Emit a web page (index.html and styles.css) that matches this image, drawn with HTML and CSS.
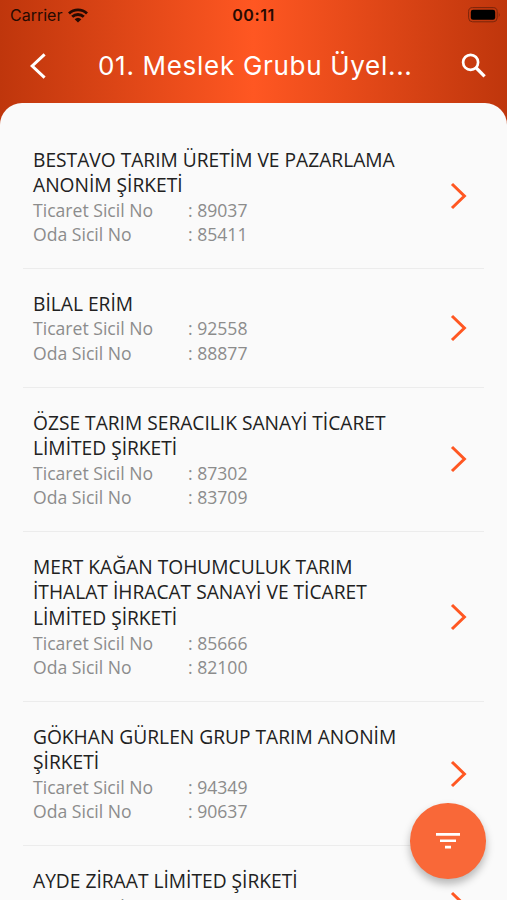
FILE: index.html
```
<!DOCTYPE html>
<html lang="tr">
<head>
<meta charset="utf-8">
<title>01. Meslek Grubu Üyeleri</title>
<link rel="stylesheet" href="styles.css">
</head>
<body>
<svg class="defs" width="0" height="0">
  <symbol id="chevron" viewBox="0 0 18 28"><path d="M2 2l12.4 12L2 26" fill="none" stroke="currentColor" stroke-width="3"/></symbol>
</svg>
<div class="phone">
  <header class="header">
    <div class="status">
      <div class="carrier">
        <span>Carrier</span>
        <svg width="20" height="15" viewBox="0 0 20 15" fill="none" stroke="#260a02" stroke-width="2.8">
          <path d="M1 5.4a13 13 0 0 1 18 0M4.2 8.8a8.4 8.4 0 0 1 11.6 0"/>
          <path d="M10 14.6L6.6 11.3a5 5 0 0 1 6.8 0z" fill="#260a02" stroke="none"/>
        </svg>
      </div>
      <div class="time">00:11</div>
      <div class="battery">
        <svg width="33" height="16" viewBox="0 0 33 16">
          <rect x=".6" y=".6" width="28.6" height="14.2" rx="4" fill="none" stroke="#7a250b"/>
          <rect x="2.8" y="2.8" width="24.4" height="10" rx="2.2" fill="#000"/>
          <path d="M30.8 5.2q1.6 2.5 0 5z" fill="#7a250b"/>
        </svg>
      </div>
    </div>
    <div class="navbar">
      <svg class="back" width="18" height="28" viewBox="0 0 18 28"><path d="M15.6 2.4L3.2 14l12.4 11.6" fill="none" stroke="#fff" stroke-width="3"/></svg>
      <h1 class="title">01. Meslek Grubu Üyel...</h1>
      <svg class="search" width="26" height="26" viewBox="0 0 26 26" fill="none" stroke="#fff"><circle cx="9.6" cy="9.3" r="7.5" stroke-width="2.7"/><path d="M14.8 14.5l8.8 8.8" stroke-width="3.2"/></svg>
    </div>
  </header>
  <main class="sheet">
    <ul class="list">
      <li class="item">
        <div class="info">
          <h2>BESTAVO TARIM ÜRETİM VE PAZARLAMA<br>ANONİM ŞİRKETİ</h2>
          <dl><dt>Ticaret Sicil No</dt><dd>: 89037</dd><dt>Oda Sicil No</dt><dd>: 85411</dd></dl>
        </div>
        <svg class="arrow"><use href="#chevron"/></svg>
      </li>
      <li class="item">
        <div class="info">
          <h2>BİLAL ERİM</h2>
          <dl><dt>Ticaret Sicil No</dt><dd>: 92558</dd><dt>Oda Sicil No</dt><dd>: 88877</dd></dl>
        </div>
        <svg class="arrow"><use href="#chevron"/></svg>
      </li>
      <li class="item">
        <div class="info">
          <h2>ÖZSE TARIM SERACILIK SANAYİ TİCARET<br>LİMİTED ŞİRKETİ</h2>
          <dl><dt>Ticaret Sicil No</dt><dd>: 87302</dd><dt>Oda Sicil No</dt><dd>: 83709</dd></dl>
        </div>
        <svg class="arrow"><use href="#chevron"/></svg>
      </li>
      <li class="item">
        <div class="info">
          <h2>MERT KAĞAN TOHUMCULUK TARIM<br>İTHALAT İHRACAT SANAYİ VE TİCARET<br>LİMİTED ŞİRKETİ</h2>
          <dl><dt>Ticaret Sicil No</dt><dd>: 85666</dd><dt>Oda Sicil No</dt><dd>: 82100</dd></dl>
        </div>
        <svg class="arrow"><use href="#chevron"/></svg>
      </li>
      <li class="item">
        <div class="info">
          <h2>GÖKHAN GÜRLEN GRUP TARIM ANONİM<br>ŞİRKETİ</h2>
          <dl><dt>Ticaret Sicil No</dt><dd>: 94349</dd><dt>Oda Sicil No</dt><dd>: 90637</dd></dl>
        </div>
        <svg class="arrow"><use href="#chevron"/></svg>
      </li>
      <li class="item">
        <div class="info">
          <h2>AYDE ZİRAAT LİMİTED ŞİRKETİ</h2>
          <dl><dt>Ticaret Sicil No</dt><dd>: 87086</dd></dl>
        </div>
        <svg class="arrow"><use href="#chevron"/></svg>
      </li>
    </ul>
  </main>
  <button class="fab" aria-label="Filtrele">
    <svg width="24" height="16" viewBox="0 0 24 16" fill="#fff"><path d="M0 0h24v2.7H0zM4 6.4h16v2.7H4zM9 12.8h6v2.7H9z"/></svg>
  </button>
</div>
</body>
</html>
```
FILE: styles.css
```
body {
  margin: 0;
  font-family: "Open Sans", "Noto Sans", sans-serif;
}

h1, h2, dl, dd, ul {
  margin: 0;
  padding: 0;
  font-weight: 400;
}

.defs {
  position: absolute;
}

.phone {
  position: relative;
  display: flex;
  flex-direction: column;
  height: 900px;
  overflow: hidden;
  background: linear-gradient(90deg, #bf360c, #ff5722 50%, #bf360c);
}

/* header */
.header {
  flex: none;
  height: 103px;
  font-family: Inter, sans-serif;
}

.status {
  display: grid;
  grid-template-columns: 1fr auto 1fr;
  align-items: center;
  height: 30px;
  padding: 0 6px 0 10px;
  color: #260a02;
  font-size: 16px;
}

.carrier {
  display: flex;
  align-items: center;
  gap: 6px;
}

.time {
  margin-right: 4px;
  font-weight: 600;
  letter-spacing: .6px;
}

.battery {
  display: flex;
  justify-content: flex-end;
}

.navbar {
  display: flex;
  align-items: center;
  height: 71px;
  padding: 0 20px 0 29px;
  color: #fff;
}

.title {
  flex: 1;
  margin-left: 51px;
  font-size: 26px;
  letter-spacing: .7px;
  white-space: nowrap;
}

/* list */
.sheet {
  flex: 1;
  min-height: 0;
  padding: 21.5px 23px 0;
  overflow: hidden;
  background: #fafafa;
  border-radius: 22px 22px 0 0;
}

.list {
  list-style: none;
}

.item {
  display: flex;
  align-items: center;
  justify-content: space-between;
  box-sizing: border-box;
  min-height: 118.7px;
  padding: 22px 16px 21.6px 10px;
  border-bottom: 1px solid #ececec;
}

.info {
  min-height: 74px;
}

.info h2 {
  color: #212121;
  font-size: 19.2px;
  line-height: 25.65px;
  white-space: nowrap;
}

.info dl {
  display: grid;
  grid-template-columns: 155px auto;
  justify-content: start;
  color: #8c8c8c;
  font-size: 17.6px;
  line-height: 24.2px;
}

.arrow {
  flex: none;
  width: 18px;
  height: 28px;
  color: #ff5722;
}

/* filter button */
.fab {
  position: absolute;
  right: 21.5px;
  bottom: 21.5px;
  display: flex;
  align-items: center;
  justify-content: center;
  width: 75.5px;
  height: 75.5px;
  padding: 0;
  border: 0;
  border-radius: 50%;
  background: #f96838;
  box-shadow: 0 5px 9px rgba(0, 0, 0, .28);
}
```
